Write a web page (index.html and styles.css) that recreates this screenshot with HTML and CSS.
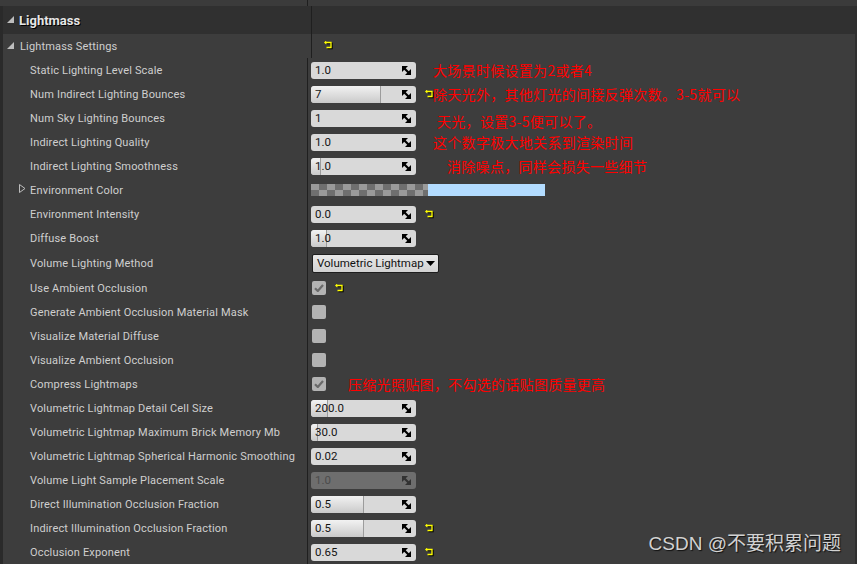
FILE: index.html
```html
<!DOCTYPE html>
<html>
<head>
<meta charset="utf-8">
<link rel="stylesheet" href="styles.css">
</head>
<body>
<div class="panel">
  <div class="row top"><div class="name"></div><div class="value"></div></div>
  <div class="body">
    <div class="row header">
      <div class="name"><svg class="tri" width="7" height="7" viewBox="0 0 7 7"><polygon points="7,0 7,7 0,7" fill="#bdbdbd"/></svg><span class="htitle">Lightmass</span></div>
      <div class="value"></div>
    </div>

    <div class="row">
      <div class="name cat"><svg class="tri" width="7" height="7" viewBox="0 0 7 7"><polygon points="7,0 7,7 0,7" fill="#bdbdbd"/></svg><span>Lightmass Settings</span></div>
      <div class="value"><svg class="reset solo" width="10" height="9" viewBox="0 0 10 9"><g transform="translate(1,1)" fill="none" stroke="#000" stroke-width="1.3"><path d="M2 1.5H7V6.5H2.5"/></g><path d="M2 1.5H7V6.5H2.5" fill="none" stroke="#ffff00" stroke-width="1.3"/><polygon points="0,1.5 2.2,-0.5 2.2,3.5" fill="#ffff00"/></svg></div>
    </div>

    <div class="row">
      <div class="name"><span class="lbl">Static Lighting Level Scale</span></div>
      <div class="value"><div class="num"><span class="v">1.0</span><svg class="spin" width="9" height="9" viewBox="0 0 9 9"><polygon points="0,0 6,0 0,6"/><polygon points="9,9 3,9 9,3"/><path d="M1 1L8 8" stroke="#000" stroke-width="2.2"/></svg></div><span class="note n1">大场景时候设置为2或者4</span></div>
    </div>

    <div class="row">
      <div class="name"><span class="lbl">Num Indirect Lighting Bounces</span></div>
      <div class="value"><div class="num"><span class="fill" style="width:69px"></span><span class="v">7</span><svg class="spin" width="9" height="9" viewBox="0 0 9 9"><polygon points="0,0 6,0 0,6"/><polygon points="9,9 3,9 9,3"/><path d="M1 1L8 8" stroke="#000" stroke-width="2.2"/></svg></div><svg class="reset" width="10" height="9" viewBox="0 0 10 9"><g transform="translate(1,1)" fill="none" stroke="#000" stroke-width="1.3"><path d="M2 1.5H7V6.5H2.5"/></g><path d="M2 1.5H7V6.5H2.5" fill="none" stroke="#ffff00" stroke-width="1.3"/><polygon points="0,1.5 2.2,-0.5 2.2,3.5" fill="#ffff00"/></svg><span class="note n2">除天光外，其他灯光的间接反弹次数。3-5就可以</span></div>
    </div>

    <div class="row">
      <div class="name"><span class="lbl">Num Sky Lighting Bounces</span></div>
      <div class="value"><div class="num"><span class="v">1</span><svg class="spin" width="9" height="9" viewBox="0 0 9 9"><polygon points="0,0 6,0 0,6"/><polygon points="9,9 3,9 9,3"/><path d="M1 1L8 8" stroke="#000" stroke-width="2.2"/></svg></div><span class="note n3">天光，设置3-5便可以了。</span></div>
    </div>

    <div class="row">
      <div class="name"><span class="lbl">Indirect Lighting Quality</span></div>
      <div class="value"><div class="num"><span class="v">1.0</span><svg class="spin" width="9" height="9" viewBox="0 0 9 9"><polygon points="0,0 6,0 0,6"/><polygon points="9,9 3,9 9,3"/><path d="M1 1L8 8" stroke="#000" stroke-width="2.2"/></svg></div><span class="note n4">这个数字极大地关系到渲染时间</span></div>
    </div>

    <div class="row">
      <div class="name"><span class="lbl">Indirect Lighting Smoothness</span></div>
      <div class="value"><div class="num"><span class="fill" style="width:9px"></span><span class="v">1.0</span><svg class="spin" width="9" height="9" viewBox="0 0 9 9"><polygon points="0,0 6,0 0,6"/><polygon points="9,9 3,9 9,3"/><path d="M1 1L8 8" stroke="#000" stroke-width="2.2"/></svg></div><span class="note n5">消除噪点，同样会损失一些细节</span></div>
    </div>

    <div class="row">
      <div class="name"><svg class="open" width="7" height="9" viewBox="0 0 7 9"><polygon points="0.5,0.5 6,4.5 0.5,8.5" fill="none" stroke="#bdbdbd" stroke-width="1"/></svg><span>Environment Color</span></div>
      <div class="value"><div class="color"><span class="checker"></span><span class="swatch"></span></div></div>
    </div>

    <div class="row">
      <div class="name"><span class="lbl">Environment Intensity</span></div>
      <div class="value"><div class="num"><span class="v">0.0</span><svg class="spin" width="9" height="9" viewBox="0 0 9 9"><polygon points="0,0 6,0 0,6"/><polygon points="9,9 3,9 9,3"/><path d="M1 1L8 8" stroke="#000" stroke-width="2.2"/></svg></div><svg class="reset" width="10" height="9" viewBox="0 0 10 9"><g transform="translate(1,1)" fill="none" stroke="#000" stroke-width="1.3"><path d="M2 1.5H7V6.5H2.5"/></g><path d="M2 1.5H7V6.5H2.5" fill="none" stroke="#ffff00" stroke-width="1.3"/><polygon points="0,1.5 2.2,-0.5 2.2,3.5" fill="#ffff00"/></svg></div>
    </div>

    <div class="row">
      <div class="name"><span class="lbl">Diffuse Boost</span></div>
      <div class="value"><div class="num"><span class="fill" style="width:15px"></span><span class="v">1.0</span><svg class="spin" width="9" height="9" viewBox="0 0 9 9"><polygon points="0,0 6,0 0,6"/><polygon points="9,9 3,9 9,3"/><path d="M1 1L8 8" stroke="#000" stroke-width="2.2"/></svg></div></div>
    </div>

    <div class="row tall">
      <div class="name"><span class="lbl">Volume Lighting Method</span></div>
      <div class="value"><div class="combo"><span>Volumetric Lightmap</span><svg width="9" height="5" viewBox="0 0 9 5"><polygon points="0,0 9,0 4.5,5" fill="#000"/></svg></div></div>
    </div>

    <div class="row">
      <div class="name"><span class="lbl">Use Ambient Occlusion</span></div>
      <div class="value"><span class="check"><svg width="10" height="8" viewBox="0 0 10 8"><path d="M1 4.2L3.8 7L9 1" fill="none" stroke="#6a6a6a" stroke-width="2.2"/></svg></span><svg class="reset r-cb" width="10" height="9" viewBox="0 0 10 9"><g transform="translate(1,1)" fill="none" stroke="#000" stroke-width="1.3"><path d="M2 1.5H7V6.5H2.5"/></g><path d="M2 1.5H7V6.5H2.5" fill="none" stroke="#ffff00" stroke-width="1.3"/><polygon points="0,1.5 2.2,-0.5 2.2,3.5" fill="#ffff00"/></svg></div>
    </div>

    <div class="row">
      <div class="name"><span class="lbl">Generate Ambient Occlusion Material Mask</span></div>
      <div class="value"><span class="check"></span></div>
    </div>

    <div class="row">
      <div class="name"><span class="lbl">Visualize Material Diffuse</span></div>
      <div class="value"><span class="check"></span></div>
    </div>

    <div class="row">
      <div class="name"><span class="lbl">Visualize Ambient Occlusion</span></div>
      <div class="value"><span class="check"></span></div>
    </div>

    <div class="row">
      <div class="name"><span class="lbl">Compress Lightmaps</span></div>
      <div class="value"><span class="check"><svg width="10" height="8" viewBox="0 0 10 8"><path d="M1 4.2L3.8 7L9 1" fill="none" stroke="#6a6a6a" stroke-width="2.2"/></svg></span><span class="note n6">压缩光照贴图，不勾选的话贴图质量更高</span></div>
    </div>

    <div class="row">
      <div class="name"><span class="lbl">Volumetric Lightmap Detail Cell Size</span></div>
      <div class="value"><div class="num"><span class="fill" style="width:16px"></span><span class="v">200.0</span><svg class="spin" width="9" height="9" viewBox="0 0 9 9"><polygon points="0,0 6,0 0,6"/><polygon points="9,9 3,9 9,3"/><path d="M1 1L8 8" stroke="#000" stroke-width="2.2"/></svg></div></div>
    </div>

    <div class="row">
      <div class="name"><span class="lbl">Volumetric Lightmap Maximum Brick Memory Mb</span></div>
      <div class="value"><div class="num"><span class="fill" style="width:6px"></span><span class="v">30.0</span><svg class="spin" width="9" height="9" viewBox="0 0 9 9"><polygon points="0,0 6,0 0,6"/><polygon points="9,9 3,9 9,3"/><path d="M1 1L8 8" stroke="#000" stroke-width="2.2"/></svg></div></div>
    </div>

    <div class="row">
      <div class="name"><span class="lbl">Volumetric Lightmap Spherical Harmonic Smoothing</span></div>
      <div class="value"><div class="num"><span class="v">0.02</span><svg class="spin" width="9" height="9" viewBox="0 0 9 9"><polygon points="0,0 6,0 0,6"/><polygon points="9,9 3,9 9,3"/><path d="M1 1L8 8" stroke="#000" stroke-width="2.2"/></svg></div></div>
    </div>

    <div class="row">
      <div class="name"><span class="lbl">Volume Light Sample Placement Scale</span></div>
      <div class="value"><div class="num disabled"><span class="v">1.0</span><svg class="spin" width="9" height="9" viewBox="0 0 9 9"><polygon points="0,0 6,0 0,6"/><polygon points="9,9 3,9 9,3"/><path d="M1 1L8 8" stroke="#333" stroke-width="2.2"/></svg></div></div>
    </div>

    <div class="row">
      <div class="name"><span class="lbl">Direct Illumination Occlusion Fraction</span></div>
      <div class="value"><div class="num"><span class="fill" style="width:52px"></span><span class="v">0.5</span><svg class="spin" width="9" height="9" viewBox="0 0 9 9"><polygon points="0,0 6,0 0,6"/><polygon points="9,9 3,9 9,3"/><path d="M1 1L8 8" stroke="#000" stroke-width="2.2"/></svg></div></div>
    </div>

    <div class="row">
      <div class="name"><span class="lbl">Indirect Illumination Occlusion Fraction</span></div>
      <div class="value"><div class="num"><span class="fill" style="width:52px"></span><span class="v">0.5</span><svg class="spin" width="9" height="9" viewBox="0 0 9 9"><polygon points="0,0 6,0 0,6"/><polygon points="9,9 3,9 9,3"/><path d="M1 1L8 8" stroke="#000" stroke-width="2.2"/></svg></div><svg class="reset" width="10" height="9" viewBox="0 0 10 9"><g transform="translate(1,1)" fill="none" stroke="#000" stroke-width="1.3"><path d="M2 1.5H7V6.5H2.5"/></g><path d="M2 1.5H7V6.5H2.5" fill="none" stroke="#ffff00" stroke-width="1.3"/><polygon points="0,1.5 2.2,-0.5 2.2,3.5" fill="#ffff00"/></svg></div>
    </div>

    <div class="row">
      <div class="name"><span class="lbl">Occlusion Exponent</span></div>
      <div class="value"><div class="num"><span class="v">0.65</span><svg class="spin" width="9" height="9" viewBox="0 0 9 9"><polygon points="0,0 6,0 0,6"/><polygon points="9,9 3,9 9,3"/><path d="M1 1L8 8" stroke="#000" stroke-width="2.2"/></svg></div><svg class="reset" width="10" height="9" viewBox="0 0 10 9"><g transform="translate(1,1)" fill="none" stroke="#000" stroke-width="1.3"><path d="M2 1.5H7V6.5H2.5"/></g><path d="M2 1.5H7V6.5H2.5" fill="none" stroke="#ffff00" stroke-width="1.3"/><polygon points="0,1.5 2.2,-0.5 2.2,3.5" fill="#ffff00"/></svg></div>
    </div>
  </div>
  <div class="watermark">CSDN @不要积累问题</div>
</div>
</body>
</html>
```

FILE: styles.css
```css
html, body {
  margin: 0;
  padding: 0;
  background: #3d3d3d;
  overflow: hidden;
}
.panel {
  position: relative;
  width: 857px;
  height: 564px;
  overflow: hidden;
  font-family: Roboto, "Noto Sans CJK SC", sans-serif;
  font-size: 11px;
  letter-spacing: 0.17px;
  color: #cfcfcf;
}
.body {
  border-left: 3px solid #2a2a2a;
  border-right: 2px solid #2f2f2f;
}
.row {
  display: flex;
  height: 24px;
}
.row.top {
  height: 6px;
  background: #3b3b3b;
}
.row.top .name { width: 307px; }
.row.tall { height: 26px; }
.name {
  width: 304px;
  flex: none;
  display: flex;
  align-items: center;
  white-space: nowrap;
}
.value {
  flex: 1;
  border-left: 1px solid #1f1f1f;
  display: flex;
  align-items: center;
  padding-left: 3px;
  white-space: nowrap;
}
.header {
  height: 28px;
  background: #303030;
}
.header .name { padding-left: 4px; }
.tri { margin-right: 5px; margin-top: -1px; }
.htitle {
  font-weight: bold;
  font-size: 13px;
  letter-spacing: 0;
  color: #e6e6e6;
  text-shadow: 1px 1px 0 #000;
}
.cat { padding-left: 4px; }
.cat .tri { margin-right: 6px; }
.lbl { padding-left: 27px; }
.open { margin-left: 16px; margin-right: 4px; margin-top: -3px; }

.num {
  position: relative;
  width: 105px;
  height: 17px;
  border-radius: 3px;
  background: #d9d9d9;
  display: flex;
  align-items: center;
  flex: none;
  overflow: hidden;
  color: #141414;
  letter-spacing: 0;
}
.num .v {
  position: relative;
  padding-left: 4px;
  flex: 1;
  font-size: 11.5px;
}
.num .fill {
  position: absolute;
  left: 0;
  top: 0;
  bottom: 0;
  background: linear-gradient(#f2f2f2, #dadada 60%, #c9c9c9);
  border-right: 1px solid #9c9c9c;
  border-radius: 3px 0 0 3px;
}
.num .spin {
  position: relative;
  margin-right: 5px;
  fill: #000;
}
.num.disabled {
  background: #6e6e6e;
  color: #4c4c4c;
}
.num.disabled .spin { fill: #333; }

.reset { margin-left: 9px; flex: none; }
.reset.solo { margin-left: 9px; margin-top: -2px; }
.reset.r-cb { margin-left: 9px; }

.check {
  width: 14px;
  height: 14px;
  margin-left: 1px;
  border-radius: 2px;
  background: #b3b3b3;
  display: flex;
  align-items: center;
  justify-content: center;
  flex: none;
}

.color {
  display: flex;
  height: 12px;
}
.checker {
  width: 117px;
  height: 12px;
  background-color: #9a9a9a;
  background-image: conic-gradient(#6f6f6f 0 25%, #9a9a9a 0 50%, #6f6f6f 0 75%, #9a9a9a 0);
  background-size: 16px 12px;
}
.swatch {
  width: 117px;
  height: 12px;
  background: #b3dcff;
}

.combo {
  width: 127px;
  height: 19px;
  box-sizing: border-box;
  border: 1px solid #1e1e1e;
  border-radius: 2px;
  background: linear-gradient(#e8e8e8, #d2d2d2);
  display: flex;
  align-items: center;
  justify-content: space-between;
  padding: 0 3px 0 4px;
  color: #111;
  font-size: 11.5px;
  letter-spacing: 0;
  margin-left: 1px;
}

.note {
  font-family: "Noto Sans CJK SC", sans-serif;
  font-size: 14px;
  color: #ff0000;
  letter-spacing: 0.3px;
}
.n1 { margin-left: 17px; }
.n2 { margin-left: -2px; }
.n3 { margin-left: 21px; margin-top: 6px; }
.n4 { margin-left: 17px; }
.n5 { margin-left: 31px; }
.n6 { margin-left: 22px; }

.watermark {
  position: absolute;
  right: 16px;
  bottom: 9px;
  font-family: "Liberation Sans", "Noto Sans CJK SC", sans-serif;
  font-size: 19px;
  letter-spacing: 0;
  color: #d2d2d2;
  text-shadow: 1px 1px 1px #111;
}
```
